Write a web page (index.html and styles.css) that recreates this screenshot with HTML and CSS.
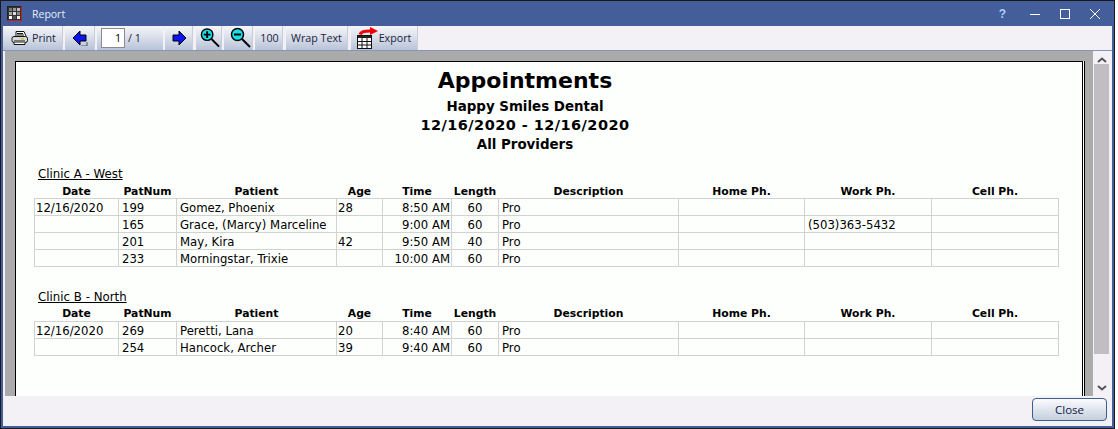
FILE: index.html
```html
<!DOCTYPE html>
<html lang="en">
<head>
<meta charset="utf-8">
<title>Report</title>
<link rel="stylesheet" href="styles.css">
</head>
<body>
<div class="window">
  <header class="titlebar">
    <svg class="app-icon" width="16" height="16" viewBox="0 0 16 16"><rect x="0.5" y="0.5" width="14" height="14" fill="#333" stroke="#222"/><path d="M0 14.5H14.5V0" fill="none" stroke="#c02020"/><rect x="2" y="2" width="3" height="3" fill="#777"/><rect x="6" y="2" width="3" height="3" fill="#999"/><rect x="10" y="2" width="3" height="3" fill="#bbb"/><rect x="2" y="6" width="3" height="3" fill="#aaa"/><rect x="6" y="6" width="3" height="3" fill="#ddd"/><rect x="10" y="6" width="3" height="3" fill="#888"/><rect x="2" y="10" width="3" height="3" fill="#fff"/><rect x="6" y="10" width="3" height="3" fill="#555"/><rect x="10" y="10" width="3" height="3" fill="#eee"/></svg>
    <span class="title">Report</span>
    <span class="help">?</span>
    <svg class="win-btn min" width="12" height="12" viewBox="0 0 12 12"><path d="M1 6.5H11" stroke="#fff"/></svg>
    <svg class="win-btn max" width="12" height="12" viewBox="0 0 12 12"><rect x="1.5" y="1.5" width="9" height="9" fill="none" stroke="#fff"/></svg>
    <svg class="win-btn close" width="12" height="12" viewBox="0 0 12 12"><path d="M1 1L11 11M11 1L1 11" stroke="#fff"/></svg>
  </header>
  <div class="client">
    <nav class="toolbar">
      <div class="tool w-print">
        <svg width="18" height="16" viewBox="0 0 18 16"><path d="M5 6V1.5H13L15 6" fill="#fff" stroke="#111"/><path d="M6 3.5H12M6 5H13" stroke="#111"/><rect x="1" y="6.5" width="15.5" height="6" rx="2" fill="#d8d8d8" stroke="#111"/><rect x="10" y="8" width="3" height="1.5" fill="#d8c020"/><path d="M3 12.5V14.5H14V12.5" fill="#fff" stroke="#111"/><path d="M3 11H14" stroke="#111"/></svg>
        <span>Print</span>
      </div>
      <div class="tool w-prev">
        <svg width="16" height="16" viewBox="0 0 16 16"><path d="M8 1L1 8L8 15V11H14V5H8Z" fill="#0a14f0" stroke="#000"/><path d="M9 16H15V12" fill="none" stroke="#555"/></svg>
      </div>
      <div class="pager">
        <span class="page-box">1</span><span>/ 1</span>
      </div>
      <div class="tool w-next">
        <svg width="16" height="16" viewBox="0 0 16 16"><path d="M8 1L15 8L8 15V11H2V5H8Z" fill="#0a14f0" stroke="#000"/></svg>
      </div>
      <div class="tool w-zoomin">
        <svg width="22" height="22" viewBox="0 0 22 22"><path d="M12 12L20 20" stroke="#000" stroke-width="2"/><circle cx="7.5" cy="7.5" r="6" fill="#19e0e8" stroke="#000" stroke-width="1.5"/><path d="M4 7.5H11M7.5 4V11" stroke="#000" stroke-width="2"/></svg>
      </div>
      <div class="tool w-zoomout">
        <svg width="22" height="22" viewBox="0 0 22 22"><path d="M12 12L20 20" stroke="#000" stroke-width="2"/><circle cx="7.5" cy="7.5" r="6" fill="#19e0e8" stroke="#000" stroke-width="1.5"/><path d="M4 7.5H11" stroke="#000" stroke-width="2"/></svg>
      </div>
      <div class="tool w-100"><span>100</span></div>
      <div class="tool w-wrap"><span>Wrap Text</span></div>
      <div class="tool w-export">
        <svg width="24" height="24" viewBox="0 0 24 24"><path d="M5 8.5C6 5.5 9 5 15 5" fill="none" stroke="#f00000" stroke-width="3"/><path d="M15 1L23 5L15 9Z" fill="#f00000"/><rect x="2.5" y="9.5" width="14" height="13" fill="#fff" stroke="#111"/><path d="M2.5 10H16.5V12H2.5Z" fill="#222"/><path d="M2.5 15.5H16.5M2.5 19H16.5M7 12V22M12 12V22" stroke="#111"/></svg>
        <span>Export</span>
      </div>
    </nav>
    <main class="viewer">
      <div class="canvas">
        <article class="paper">
          <div class="report-head">
            <h1>Appointments</h1>
            <p class="sub">Happy Smiles Dental</p>
            <p class="sub dates">12/16/2020 - 12/16/2020</p>
            <p class="sub">All Providers</p>
          </div>

          <h2 class="clinic first">Clinic A - West</h2>
          <table>
            <colgroup><col class="c1"><col class="c2"><col class="c3"><col class="c4"><col class="c5"><col class="c6"><col class="c7"><col class="c8"><col class="c9"><col class="c10"></colgroup>
            <thead><tr><th>Date</th><th>PatNum</th><th>Patient</th><th>Age</th><th>Time</th><th>Length</th><th>Description</th><th>Home Ph.</th><th>Work Ph.</th><th>Cell Ph.</th></tr></thead>
            <tbody>
              <tr><td>12/16/2020</td><td>199</td><td>Gomez, Phoenix</td><td>28</td><td class="r">8:50 AM</td><td class="m">60</td><td>Pro</td><td></td><td></td><td></td></tr>
              <tr><td></td><td>165</td><td>Grace, (Marcy) Marceline</td><td></td><td class="r">9:00 AM</td><td class="m">60</td><td>Pro</td><td></td><td>(503)363-5432</td><td></td></tr>
              <tr><td></td><td>201</td><td>May, Kira</td><td>42</td><td class="r">9:50 AM</td><td class="m">40</td><td>Pro</td><td></td><td></td><td></td></tr>
              <tr><td></td><td>233</td><td>Morningstar, Trixie</td><td></td><td class="r">10:00 AM</td><td class="m">60</td><td>Pro</td><td></td><td></td><td></td></tr>
            </tbody>
          </table>

          <h2 class="clinic second">Clinic B - North</h2>
          <table class="table-b">
            <colgroup><col class="c1"><col class="c2"><col class="c3"><col class="c4"><col class="c5"><col class="c6"><col class="c7"><col class="c8"><col class="c9"><col class="c10"></colgroup>
            <thead><tr><th>Date</th><th>PatNum</th><th>Patient</th><th>Age</th><th>Time</th><th>Length</th><th>Description</th><th>Home Ph.</th><th>Work Ph.</th><th>Cell Ph.</th></tr></thead>
            <tbody>
              <tr><td>12/16/2020</td><td>269</td><td>Peretti, Lana</td><td>20</td><td class="r">8:40 AM</td><td class="m">60</td><td>Pro</td><td></td><td></td><td></td></tr>
              <tr><td></td><td>254</td><td>Hancock, Archer</td><td>39</td><td class="r">9:40 AM</td><td class="m">60</td><td>Pro</td><td></td><td></td><td></td></tr>
            </tbody>
          </table>
        </article>
      </div>
      <aside class="scrollbar">
        <svg width="10" height="6" viewBox="0 0 10 6"><path d="M1 5L5 1.5L9 5" fill="none" stroke="#555" stroke-width="2"/></svg>
        <div class="thumb"></div>
        <svg width="10" height="6" viewBox="0 0 10 6"><path d="M1 1L5 4.5L9 1" fill="none" stroke="#555" stroke-width="2"/></svg>
      </aside>
    </main>
    <footer class="footer">
      <button class="close-btn" type="button">Close</button>
    </footer>
  </div>
</div>
</body>
</html>
```

FILE: styles.css
```css
* { box-sizing: border-box; }
html, body { margin: 0; padding: 0; height: 100%; overflow: hidden; }
body { background: #fff; font-family: "Liberation Sans", Arial, sans-serif; }
.window {
  width: 1115px; height: 429px;
  display: flex; flex-direction: column;
  background: #435e9b;
  border: 1px solid #1a1a1a;
  padding: 0 2px 2px;
}
.titlebar {
  flex: none; height: 25px;
  margin: 0 -2px;
  background: #435e9b;
  color: #fff;
  display: flex; align-items: center;
  padding: 0 13px 0 6px;
}
.app-icon { flex: none; }
.title { margin-left: 9px; color: #e8edf8; font-family: "Open Sans", sans-serif; font-size: 10.5px; }
.help { margin-left: auto; color: #a8d0f5; font-weight: bold; font-size: 12px; }
.win-btn { flex: none; margin-left: 18px; }
.win-btn.min { margin-left: 23px; }
.client {
  flex: 1; min-height: 0;
  display: flex; flex-direction: column;
  background: #f3f1f5;
}
.toolbar {
  flex: none; height: 25px;
  display: flex;
  align-items: stretch;
  background: #f3f1f5;
  border-bottom: 1px solid #8497b5;
  font-family: "Open Sans", sans-serif;
  font-size: 10.7px;
  color: #1a2440;
}
.tool, .pager {
  background: linear-gradient(#f6f7fa, #b9c3d8);
  margin-right: 2px;
}
.tool {
  display: flex; align-items: center; justify-content: center; gap: 5px;
  border-right: 1px solid #c7cdd9;
}
.w-print { width: 60px; padding-left: 2px; gap: 3px; }
.w-prev { width: 30px; }
.w-next { width: 28px; margin-right: 3px; }
.w-zoomin { width: 26px; padding-left: 4px; }
.w-zoomout { width: 29px; padding-left: 5px; }
.w-100 { width: 28px; padding-left: 2px; margin-right: 3px; }
.w-wrap { width: 62px; margin-right: 3px; }
.w-export { width: 67px; gap: 0; padding-right: 2px; }
.pager {
  width: 66px;
  display: flex; align-items: center; gap: 3px;
  padding-left: 4px;
}
.page-box {
  width: 24px; height: 20px;
  background: #fff; border: 1px solid #8a8a8a;
  text-align: right; padding: 2px 3px 0 0;
  color: #000;
}
.viewer {
  flex: 1; min-height: 0;
  display: flex;
  padding-left: 2px;
}
.canvas {
  flex: 1;
  min-width: 0;
  overflow: hidden;
  background: #ababab;
  padding: 10px 10px 0;
}
.paper {
  height: 400px;
  background: #fdfffd;
  border: 1px solid #000;
  box-shadow: 1px 0 0 #fdfffd, 2px 0 0 #000;
  padding: 6px 0 0 18px;
  color: #000;
  font-family: "DejaVu Sans", sans-serif;
}
.report-head { width: 1018px; margin-left: -18px; }
h1 {
  margin: 0 0 3px;
  text-align: center;
  font-size: 22px; line-height: 26px;
  font-weight: bold;
}
.sub {
  margin: 0;
  text-align: center;
  font-size: 13.4px; line-height: 19px;
  font-weight: bold;
}
.sub.dates { font-size: 14.5px; letter-spacing: 0.45px; }
.clinic {
  margin: 0;
  font-size: 11.8px; line-height: 16px;
  font-weight: normal;
  text-decoration: underline;
  padding-left: 4px;
}
.clinic.first { margin-top: 12px; }
.clinic.second { margin-top: 22px; }
table {
  border-collapse: collapse;
  table-layout: fixed;
  width: 1025px;
  font-size: 11.7px;
}
.c1 { width: 84px; } .c2 { width: 58px; } .c3 { width: 160px; } .c4 { width: 46px; }
.c5 { width: 69px; } .c6 { width: 47px; } .c7 { width: 180px; } .c8 { width: 126px; }
.c9 { width: 127px; } .c10 { width: 127px; }
th {
  height: 16px; padding: 0;
  font-size: 10.8px; line-height: 12px;
  font-weight: bold; text-align: center;
  vertical-align: bottom;
  white-space: nowrap;
}
.table-b th { height: 17px; line-height: 14px; }
td {
  height: 17px; padding: 2px 3px 0;
  border: 1px solid #d2d2d2;
  line-height: 14px;
  white-space: nowrap; overflow: hidden;
}
td:first-child, td:nth-child(4) { padding-left: 1px; }
td.r { text-align: right; padding-right: 1px; }
td.m { text-align: center; }
.scrollbar {
  flex: none; width: 19px;
  background: #f3f1f5;
  display: flex; flex-direction: column; align-items: center;
  padding: 6px 3px 5px 1px;
}
.thumb { width: 15px; flex: 1; background: #c0bec2; margin: 1px 0 31px; }
.footer {
  flex: none; height: 30px;
  padding: 2px 5px 0 0;
  display: flex; justify-content: flex-end; align-items: flex-start;
  background: #f3f1f5;
}
.close-btn {
  width: 75px; height: 23px;
  border: 1px solid #3a5f8a; border-radius: 4px;
  background: linear-gradient(#fbfbfd, #c4cfdf);
  font-family: "Open Sans", sans-serif; font-size: 11.5px;
  color: #102040;
  padding: 0;
}
```
